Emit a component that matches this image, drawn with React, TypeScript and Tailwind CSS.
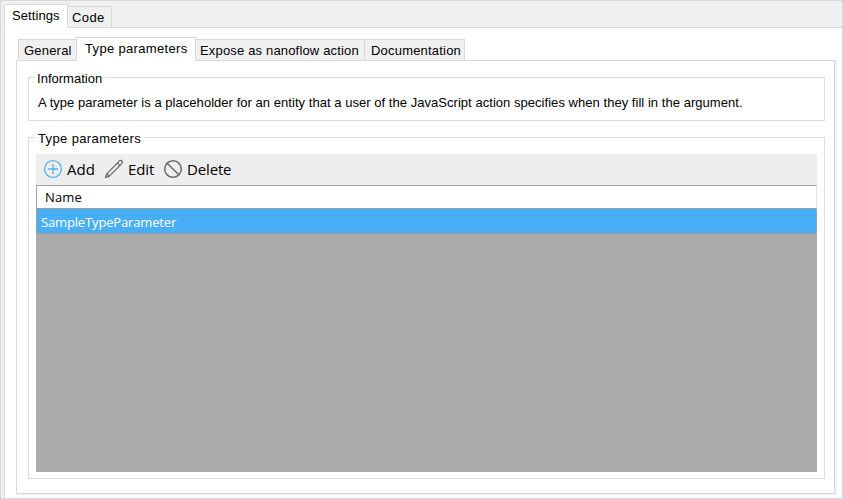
import type { ReactNode } from "react";

const ui = "font-['Liberation_Sans',Arial,sans-serif] text-[13px] leading-[15px]";
const segoe = "font-['Open_Sans','Noto_Sans',sans-serif]";

function Tab({ active, className, children }: { active?: boolean; className: string; children: ReactNode }) {
  return (
    <div
      className={`shrink-0 whitespace-nowrap border border-[#d9d9d9] ${
        active ? "z-10 border-b-white bg-white" : "bg-[#f0f0f0]"
      } ${className}`}
    >
      {children}
    </div>
  );
}

function Group({ title, className, children }: { title: ReactNode; className: string; children: ReactNode }) {
  return (
    <section className={`border border-[#dcdcdc] ${className}`}>
      <h2 className="-mt-[7px] ml-[6px] h-[15px] w-fit whitespace-nowrap bg-white pl-[2px] pr-[3px]">{title}</h2>
      {children}
    </section>
  );
}

function AddIcon() {
  return (
    <svg className="h-[20px] w-[20px] shrink-0" viewBox="0 0 20 20" fill="none" stroke="#55b3f3" strokeWidth="1.3">
      <circle cx="10" cy="10" r="8.4" />
      <path d="M10 5v10M5 10h10" />
    </svg>
  );
}

function EditIcon() {
  return (
    <svg className="h-[20px] w-[20px] shrink-0" viewBox="0 0 20 20" fill="none" stroke="#666" strokeWidth="1.2" strokeLinejoin="round">
      <path d="M1.4 18.6 2.8 14.8 15.2 2.2Q16.6.8 17.8 2T17.8 4.7L5.3 17.2Z" />
      <path d="m13.4 4 2.6 2.6M2.8 14.8l2.5 2.4" />
    </svg>
  );
}

function DeleteIcon() {
  return (
    <svg className="h-[20px] w-[20px] shrink-0" viewBox="0 0 20 20" fill="none" stroke="#6b6b6b" strokeWidth="1.5">
      <circle cx="10" cy="10" r="8.3" />
      <path d="m4.2 4.2 11.6 11.6" />
    </svg>
  );
}

export default function App() {
  return (
    <main className={`flex h-[499px] w-[843px] flex-col overflow-hidden border border-[#d9d9d9] bg-[#f0f0f0] pl-[3px] text-black ${ui}`}>
      <nav className="-mb-px flex h-[27px] shrink-0 items-end">
        <Tab active className="h-[24px] w-[64px] pl-[7px] pt-[3px]">
          <span className="tracking-[0.08px]">Settings</span>
        </Tab>
        <Tab className="-ml-px h-[22px] w-[45px] pl-[4px] pt-[3px]">
          <span className="tracking-[0.4px]">Code</span>
        </Tab>
      </nav>
      <div className="flex min-h-0 flex-1 flex-col border-l border-t border-[#d9d9d9] bg-white pb-[3px] pl-[11px] pr-[5px] pt-[9px]">
        <nav className="-mb-px flex h-[24px] shrink-0 items-end pl-[2px]">
          <Tab className="h-[22px] w-[59px] pl-[5px] pt-[3px]">
            <span className="tracking-[0.2px]">General</span>
          </Tab>
          <Tab active className="-ml-px h-[24px] w-[120px] pl-[8px] pt-[3px]">
            <span className="tracking-[0.33px]">Type parameters</span>
          </Tab>
          <Tab className="-ml-px h-[22px] w-[170px] pl-[4px] pt-[3px]">
            <span className="tracking-[0.17px]">Expose as nanoflow action</span>
          </Tab>
          <Tab className="-ml-px h-[22px] w-[101px] pl-[6px] pt-[3px]">
            <span className="tracking-[0.2px]">Documentation</span>
          </Tab>
        </nav>
        <div className="min-h-0 flex-1 border-b border-r-2 border-[#f0f0f0]">
          <div className="h-full border border-[#d9d9d9] px-[11px] pt-[16px]">
            <Group className="h-[44px] w-[797px]" title={<span className="tracking-[0.02px]">Information</span>}>
              <p className="ml-[9px] mt-[9px] whitespace-nowrap tracking-[0.04px]">
                A type parameter is a placeholder for an entity that a user of the JavaScript action specifies when they fill in the argument.
              </p>
            </Group>
            <Group
              className="mt-[16px] h-[342px] w-[797px]"
              title={<span className="ml-px tracking-[0.37px]">Type parameters</span>}
            >
              <div className={`ml-[7px] mt-[8px] flex h-[318px] w-[781px] flex-col bg-[#ababab] ${segoe}`}>
                <div className="flex h-[31px] shrink-0 items-start bg-[#eee] pl-[7px] pt-[5px] text-[15px] leading-[20px]">
                  <AddIcon />
                  <span className="ml-[4px] w-[37px]">Add</span>
                  <EditIcon />
                  <span className="ml-[4px] w-[35px] tracking-[-0.1px]">Edit</span>
                  <DeleteIcon />
                  <span className="ml-[4px] tracking-[-0.15px]">Delete</span>
                </div>
                <div className="h-[24px] shrink-0 border-b border-l border-r border-t border-[#a0a0a0] border-r-[#e5e5e5] bg-white pl-[8px] text-[13px] leading-[23px]">
                  <span className="tracking-[0.15px]">Name</span>
                </div>
                <div className="h-[25px] shrink-0 border-x border-b border-[#a0a0a0] bg-[#48aff7] pl-[4px] text-[13px] leading-[27px] text-white">
                  <span className="tracking-[-0.15px]">SampleTypeParameter</span>
                </div>
              </div>
            </Group>
          </div>
        </div>
      </div>
    </main>
  );
}
